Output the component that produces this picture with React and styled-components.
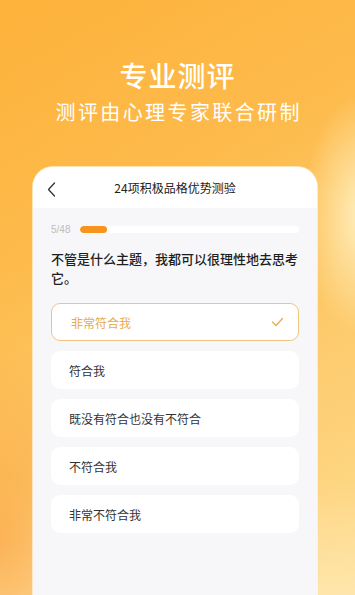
import React from "react";
import styled, { createGlobalStyle } from "styled-components";

const GlobalStyle = createGlobalStyle`
  html, body {
    margin: 0;
    padding: 0;
  }
  body {
    font-family: "Noto Sans CJK SC", "Noto Sans", sans-serif;
  }
`;

const Page = styled.div`
  width: 355px;
  height: 595px;
  overflow: hidden;
  display: flex;
  flex-direction: column;
  background:
    radial-gradient(ellipse 60px 120px at 362px 215px, rgba(255, 246, 205, 0.85), rgba(255, 246, 205, 0) 100%),
    radial-gradient(ellipse 110px 200px at 0px 540px, rgba(250, 160, 60, 0.65), rgba(250, 160, 60, 0) 100%),
    linear-gradient(180deg, rgba(255, 255, 255, 0) 80%, rgba(255, 238, 195, 0.55) 100%),
    linear-gradient(150deg, #fdb23b 0%, #fdbb4c 35%, #fdc867 60%, #fedc8f 100%);
`;

const Hero = styled.div`
  display: flex;
  flex-direction: column;
  align-items: center;
  padding-top: 58px;
  height: 109px;
  color: #fff;
`;

const HeroTitle = styled.h1`
  margin: 0;
  font-size: 28px;
  line-height: 34px;
  font-weight: 500;
  letter-spacing: 1px;
`;

const HeroSub = styled.p`
  margin: 6px 0 0 2.4px;
  font-size: 20px;
  line-height: 28px;
  font-weight: 400;
  letter-spacing: 2.4px;
`;

const Phone = styled.div`
  margin: 0 38px 0 33px;
  flex: 1;
  display: flex;
  flex-direction: column;
  background: #f7f7f9;
  border-radius: 20px 20px 0 0;
  box-shadow: 0 0 0 1px rgba(255, 255, 255, 0.6);
  overflow: hidden;
`;

const NavBar = styled.div`
  height: 41px;
  background: #fff;
  display: flex;
  align-items: center;
  justify-content: center;
  position: relative;
  font-size: 12px;
  color: #222;
`;

const Back = styled.span`
  position: absolute;
  left: 14px;
  top: 15px;
  display: flex;
`;

const Body = styled.div`
  padding: 14px 18px 0;
  display: flex;
  flex-direction: column;
`;

const ProgressRow = styled.div`
  display: flex;
  align-items: center;
  gap: 10px;
  height: 14px;
`;

const Count = styled.span`
  font-size: 10px;
  color: #bdbdbd;
  font-family: "Liberation Sans", sans-serif;
`;

const Track = styled.div`
  flex: 1;
  height: 7px;
  border-radius: 4px;
  background: #fff;
  overflow: hidden;
`;

const Fill = styled.div`
  height: 100%;
  border-radius: 4px;
  background: #f7941d;
`;

const Question = styled.p`
  margin: 13px 0 16px;
  font-size: 13px;
  line-height: 19px;
  color: #1e1e1e;
  font-weight: 500;
`;

const Options = styled.div`
  display: flex;
  flex-direction: column;
  gap: 10px;
`;

const Option = styled.div`
  height: 38px;
  box-sizing: border-box;
  border-radius: 9px;
  background: #fff;
  border: 1.5px solid ${(p) => (p.$active ? "#efc582" : "#fff")};
  display: flex;
  align-items: center;
  justify-content: space-between;
  padding: 0 14px 0 ${(p) => (p.$active ? "19px" : "17px")};
  font-size: 12px;
  color: ${(p) => (p.$active ? "#e9a94a" : "#333")};
`;

const options = ["非常符合我", "符合我", "既没有符合也没有不符合", "不符合我", "非常不符合我"];

export default function App() {
  const current = 5;
  const total = 48;
  return (
    <Page>
      <GlobalStyle />
      <Hero>
        <HeroTitle>专业测评</HeroTitle>
        <HeroSub>测评由心理专家联合研制</HeroSub>
      </Hero>
      <Phone>
        <NavBar>
          <Back>
            <svg width="9" height="15" viewBox="0 0 9 15">
              <path d="M7.5 1 L1.5 7.5 L7.5 14" fill="none" stroke="#333" strokeWidth="1.3" strokeLinecap="round" strokeLinejoin="round" />
            </svg>
          </Back>
          24项积极品格优势测验
        </NavBar>
        <Body>
          <ProgressRow>
            <Count>
              {current}/{total}
            </Count>
            <Track>
              <Fill style={{ width: `${(current / total) * 100 + 1.5}%` }} />
            </Track>
          </ProgressRow>
          <Question>不管是什么主题，我都可以很理性地去思考它。</Question>
          <Options>
            {options.map((o, i) => (
              <Option key={o} $active={i === 0}>
                {o}
                {i === 0 && (
                  <svg width="13" height="10" viewBox="0 0 13 10">
                    <path d="M1.5 5 L5 8.5 L11.5 1.5" fill="none" stroke="#e9ad5a" strokeWidth="1.4" strokeLinecap="round" strokeLinejoin="round" />
                  </svg>
                )}
              </Option>
            ))}
          </Options>
        </Body>
      </Phone>
    </Page>
  );
}
